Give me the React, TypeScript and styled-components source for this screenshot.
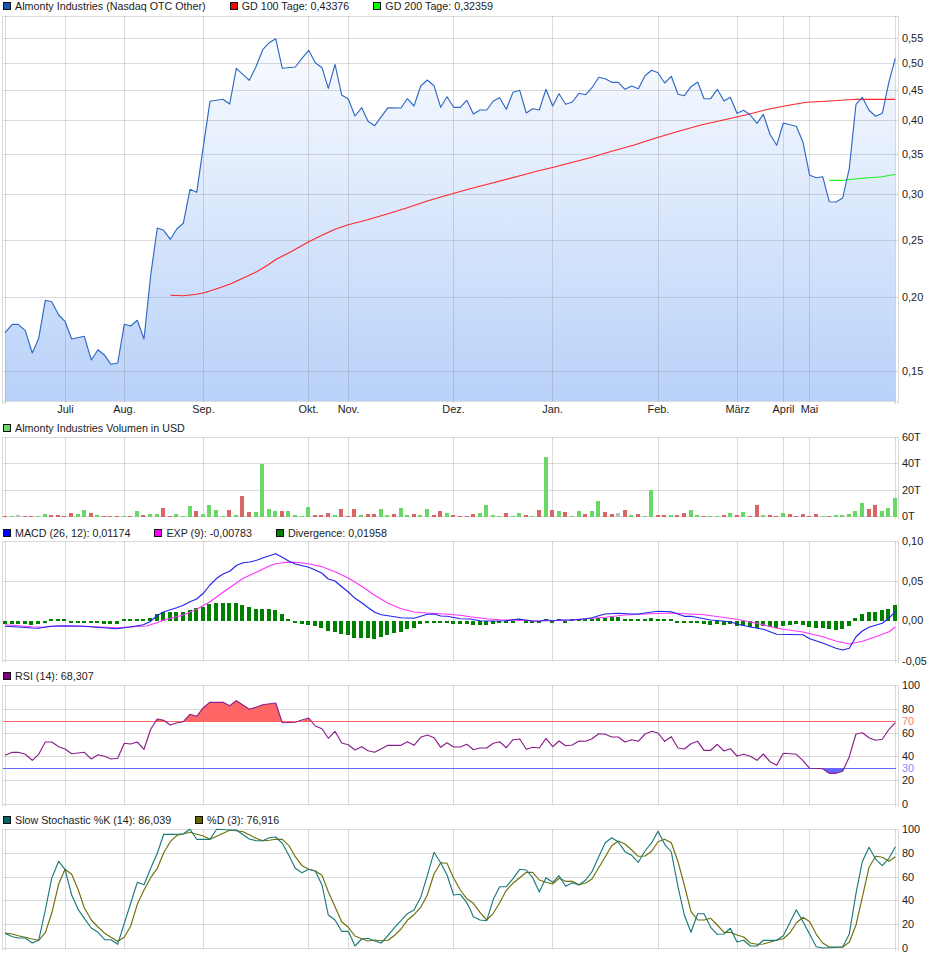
import React from 'react'
import styled, { createGlobalStyle } from 'styled-components'

const GlobalStyle = createGlobalStyle`
    html, body {
        margin: 0;
        padding: 0;
        background: #fff;
    }
`

const Page = styled.div`
    width: 940px;
    height: 958px;
    overflow: hidden;
    font-family: 'Liberation Sans', Arial, sans-serif;
    font-size: 10.72px;
    color: #1c1c1c;
`

const Legend = styled.div`
    display: flex;
    align-items: center;
    gap: 24px;
    height: 12px;
    padding-left: 3px;
    white-space: nowrap;
`

const LegendItem = styled.div`
    display: flex;
    align-items: center;
    gap: 4px;
`

const Swatch = styled.span<{ $color: string }>`
    width: 6px;
    height: 6px;
    border: 1px solid #111;
    background: ${(p) => p.$color};
`

const Plot = styled.svg`
    display: block;
    overflow: visible;
`

const GridLine = styled.line`
    stroke: rgba(137, 137, 137, 0.3);
    stroke-width: 1;
    shape-rendering: crispEdges;
`

const Series = styled.polyline<{ $color: string }>`
    fill: none;
    stroke: ${(p) => p.$color};
    stroke-width: 1.15;
    stroke-linejoin: round;
`

const Level = styled.line<{ $color: string }>`
    stroke: ${(p) => p.$color};
    stroke-width: 1;
    shape-rendering: crispEdges;
`

const Bar = styled.rect`
    shape-rendering: crispEdges;
`

const AxisLabel = styled.text<{ $color?: string }>`
    font-family: 'Liberation Sans', Arial, sans-serif;
    font-size: 10.9px;
    fill: ${(p) => p.$color || '#1c1c1c'};
    dominant-baseline: central;
`

// the reference was read at 3x: these turn crop coordinates back into page pixels
const crop = (ox: number, oy: number, list: number[]) => {
    const out: string[] = []
    for (let i = 0; i < list.length; i += 2) {
        out.push(`${(ox + list[i] / 3).toFixed(1)},${(oy + list[i + 1] / 3).toFixed(1)}`)
    }
    return out.join(' ')
}
const barX = (i: number) => Math.round(5 + 6.593 * i)

const MONTHS: [string, number][] = [
    ['Juli', 65.5],
    ['Aug.', 124.5],
    ['Sep.', 203.5],
    ['Okt.', 308.5],
    ['Nov.', 348.5],
    ['Dez.', 453.5],
    ['Jan.', 552.5],
    ['Feb.', 658.5],
    ['März', 737.5],
    ['April', 783.5],
    ['Mai', 809.5],
]

const PRICE =
    crop(0, 220, [
        15, 338, 37, 313, 55, 313, 76, 332, 97, 399, 116, 355, 136, 241, 155, 245, 176, 285, 195, 304, 215, 357, 253,
        349, 274, 420, 294, 389, 314, 406, 333, 433, 353, 429, 373, 313, 392, 318, 412, 301, 432, 357, 452, 165, 472, 24,
        491, 31, 511, 58, 531, 26, 550, 10,
    ]) +
    ' ' +
    crop(0, 0, [
        570, 568, 590, 577, 610, 440, 630, 304, 669, 298, 689, 312, 709, 205, 748, 241, 768, 200, 788, 149, 808, 128,
        827, 116, 847, 205, 886, 201, 906, 175, 926, 151, 946, 188, 966, 203, 985, 265, 1005, 193, 1025, 285, 1045, 297,
        1065, 348, 1085, 323, 1104, 364, 1124, 377, 1144, 350, 1164, 323, 1203, 324, 1222, 296, 1242, 318, 1262, 258,
        1282, 240, 1302, 257, 1322, 322, 1341, 290, 1361, 322, 1381, 322, 1400, 301,
    ]) +
    ' ' +
    crop(470, 0, [
        0, 320, 10, 342, 30, 330, 50, 330, 70, 303, 89, 293, 109, 328, 129, 277, 149, 271, 169, 339, 188, 326, 208, 330,
        228, 268, 248, 318, 267, 281, 287, 313, 307, 306, 327, 280, 347, 284, 366, 263, 386, 232, 406, 236, 425, 247,
        445, 247, 465, 268, 485, 258, 505, 266, 525, 227, 545, 211, 564, 218, 584, 249, 604, 229, 624, 283, 643, 287,
        663, 260, 683, 246, 702, 296, 722, 296, 742, 268, 762, 303, 781, 292, 801, 340, 821, 331, 841, 345, 861, 370,
        880, 343, 900, 403, 920, 436, 940, 369, 979, 379, 999, 427, 1019, 526, 1039, 533, 1058, 530, 1078, 605, 1098,
        606, 1118, 594, 1138, 505, 1158, 313, 1177, 292, 1197, 331, 1217, 349, 1237, 340, 1257, 245, 1276, 175,
    ])

const GD100 =
    crop(0, 220, [
        511, 226, 550, 227, 590, 223, 610, 219, 650, 206, 689, 193, 730, 174, 770, 155, 800, 137, 830, 117, 870, 97, 926,
        65, 966, 46, 1005, 28, 1045, 14,
    ]) +
    ' ' +
    crop(0, 0, [1100, 660, 1164, 641, 1222, 623, 1282, 603, 1341, 586, 1410, 566]) +
    ' ' +
    crop(470, 0, [
        70, 548, 150, 527, 200, 514, 250, 502, 300, 489, 360, 473, 420, 455, 490, 436, 560, 413, 620, 395, 690, 376, 760,
        360, 830, 344, 900, 326, 960, 315, 1010, 307, 1080, 303, 1160, 298, 1276, 298,
    ])

const GD200 = crop(470, 0, [1078, 541, 1118, 541, 1177, 535, 1237, 530, 1276, 523])

// g = green, r = red, n = grey; heights in crop units
const VOLUME: [number, string][] = [
    [2, 'r'], [2, 'g'], [5, 'n'], [2, 'r'], [2, 'r'], [2, 'g'], [8, 'g'], [5, 'r'], [5, 'r'], [2, 'r'],
    [11, 'r'], [8, 'g'], [20, 'g'], [11, 'r'], [5, 'g'], [2, 'r'], [2, 'r'], [2, 'r'], [2, 'g'], [2, 'r'],
    [17, 'g'], [5, 'r'], [8, 'g'], [8, 'g'], [26, 'r'], [2, 'r'], [8, 'g'], [2, 'g'], [32, 'g'], [17, 'r'],
    [8, 'g'], [35, 'g'], [20, 'g'], [2, 'g'], [20, 'r'], [5, 'g'], [62, 'r'], [14, 'r'], [14, 'g'], [158, 'g'],
    [23, 'g'], [17, 'g'], [17, 'r'], [17, 'g'], [5, 'g'], [2, 'g'], [29, 'g'], [5, 'r'], [5, 'r'], [11, 'r'],
    [5, 'g'], [23, 'r'], [2, 'r'], [23, 'r'], [5, 'g'], [8, 'r'], [8, 'r'], [23, 'g'], [5, 'g'], [8, 'r'],
    [26, 'g'], [5, 'g'], [8, 'r'], [5, 'g'], [23, 'g'], [5, 'r'], [17, 'r'], [11, 'g'], [5, 'r'], [2, 'r'],
    [2, 'r'], [8, 'r'], [11, 'g'], [35, 'g'], [5, 'g'], [2, 'g'], [11, 'r'], [2, 'g'], [11, 'g'], [5, 'r'],
    [2, 'g'], [20, 'r'], [180, 'g'], [20, 'r'], [17, 'g'], [14, 'r'], [2, 'g'], [17, 'g'], [8, 'r'], [17, 'g'],
    [47, 'g'], [14, 'r'], [8, 'r'], [11, 'n'], [20, 'r'], [5, 'g'], [8, 'r'], [2, 'g'], [80, 'g'], [5, 'r'],
    [5, 'r'], [5, 'g'], [5, 'r'], [11, 'r'], [20, 'g'], [5, 'g'], [2, 'r'], [2, 'g'], [2, 'g'], [5, 'r'],
    [11, 'g'], [5, 'r'], [14, 'g'], [2, 'r'], [35, 'r'], [5, 'g'], [5, 'r'], [2, 'r'], [11, 'g'], [8, 'r'],
    [2, 'r'], [8, 'r'], [2, 'r'], [8, 'r'], [2, 'g'], [2, 'r'], [5, 'g'], [5, 'g'], [8, 'g'], [17, 'g'],
    [41, 'g'], [23, 'r'], [35, 'r'], [17, 'g'], [26, 'g'], [56, 'g'],
]
const VOLUME_COLORS: Record<string, string> = { g: '#6ad867', r: '#d96666', n: '#bdbdbd' }

const DIVERGENCE = [
    -10, -8, -8, -8, -11, -8, -5, 3, 3, 3, -3, -3, -5, -5, -6, -8, -8, -8, 2, 2, 2, 2, 10, 22, 28, 28, 28, 28, 32, 38,
    43, 52, 55, 55, 53, 55, 48, 42, 37, 37, 35, 32, 20, 7, -3, -9, -11, -16, -22, -30, -33, -38, -42, -50, -50, -52, -55,
    -48, -42, -36, -32, -24, -20, -10, -5, -3, -5, -7, -9, -9, -10, -12, -12, -12, -10, -6, -6, -2, 2, -4, -5, -7, 1, -3,
    0, -1, 1, 2, 2, 3, 10, 10, 11, 12, 7, 4, 1, 2, 8, 7, 4, 4, -3, -6, -6, -6, -9, -12, -9, -12, -10, -14, -16, -18, -20,
    -14, -18, -20, -16, -11, -10, -12, -18, -20, -20, -25, -27, -25, -15, 8, 22, 28, 28, 32, 37, 47,
]

const MACD =
    crop(0, 420, [
        15, 619, 55, 621, 95, 624, 116, 625, 150, 619, 195, 617, 250, 619, 290, 622, 350, 626, 390, 621, 430, 614, 450,
        605, 470, 588, 490, 576, 530, 563, 550, 556, 570, 545, 590, 537, 610, 520, 630, 495, 650, 475, 669, 462, 689,
        454, 710, 436, 730, 428, 750, 426, 770, 421, 790, 413, 827, 401, 847, 412, 866, 423, 886, 432, 926, 442, 946,
        450, 966, 460, 985, 477, 1005, 483, 1025, 500, 1045, 516, 1065, 535, 1085, 548, 1105, 563, 1124, 577, 1144, 584,
        1164, 587, 1203, 593, 1242, 595, 1262, 589, 1282, 583, 1302, 582, 1322, 588, 1341, 589, 1381, 596,
    ]) +
    ' ' +
    crop(470, 420, [
        0, 597, 30, 602, 70, 603, 108, 602, 147, 597, 187, 603, 207, 604, 228, 599, 248, 602, 267, 600, 307, 600, 347,
        596, 366, 593, 386, 587, 406, 582, 445, 580, 485, 582, 505, 582, 525, 579, 564, 574, 604, 575, 643, 589, 663,
        589, 702, 596, 722, 600, 781, 605, 801, 612, 841, 621, 880, 628, 920, 643, 999, 644, 1019, 656, 1058, 669, 1098,
        685, 1118, 690, 1138, 685, 1158, 650, 1177, 633, 1197, 622, 1237, 610, 1257, 594, 1276, 575,
    ])

const EXP =
    crop(0, 420, [
        15, 614, 55, 617, 95, 620, 130, 622, 170, 618, 250, 619, 300, 621, 350, 623, 400, 620, 440, 618, 470, 608, 500,
        598, 550, 585, 590, 568, 630, 545, 669, 517, 710, 488, 730, 475, 770, 456, 808, 438, 827, 431, 860, 427, 886,
        427, 926, 431, 966, 440, 1005, 455, 1045, 474, 1085, 499, 1124, 526, 1164, 550, 1203, 566, 1242, 576, 1282, 579,
        1322, 581, 1381, 586,
    ]) +
    ' ' +
    crop(470, 420, [
        0, 590, 50, 596, 100, 600, 147, 601, 207, 603, 248, 602, 307, 600, 366, 595, 406, 592, 465, 585, 525, 582, 604,
        579, 702, 584, 801, 598, 860, 610, 920, 625, 999, 636, 1058, 650, 1098, 663, 1138, 672, 1177, 664, 1217, 650,
        1257, 635, 1276, 621,
    ])

const RSI =
    crop(0, 665, [
        15, 271, 37, 262, 55, 262, 76, 268, 97, 286, 116, 268, 136, 231, 155, 231, 176, 245, 195, 252, 215, 266, 253,
        262, 274, 282, 294, 269, 314, 274, 333, 282, 353, 280, 373, 235, 392, 237, 412, 231, 432, 253, 452, 193, 472,
        162, 491, 166, 511, 180, 531, 173, 550, 170, 570, 148, 590, 154, 610, 128, 630, 112, 669, 112, 689, 122, 709,
        107, 748, 133, 768, 127, 788, 119, 827, 114, 847, 173, 886, 172, 906, 165, 926, 159, 946, 183, 966, 191, 985,
        220, 1005, 199, 1025, 234, 1045, 239, 1065, 255, 1085, 245, 1104, 257, 1124, 262, 1164, 241, 1203, 241, 1222,
        230, 1242, 241, 1262, 217, 1282, 210, 1302, 218, 1322, 247, 1341, 233, 1361, 246, 1381, 246, 1400, 238,
    ]) +
    ' ' +
    crop(470, 665, [
        0, 245, 10, 254, 30, 249, 50, 249, 70, 235, 89, 230, 109, 248, 129, 224, 149, 222, 169, 253, 188, 247, 208, 249,
        228, 220, 248, 245, 267, 228, 287, 242, 307, 240, 327, 228, 347, 229, 366, 221, 386, 206, 406, 208, 425, 216,
        445, 216, 465, 231, 485, 224, 505, 229, 525, 207, 545, 199, 564, 204, 584, 229, 604, 215, 624, 249, 643, 252,
        663, 236, 683, 229, 702, 256, 722, 256, 742, 238, 762, 258, 781, 251, 801, 273, 821, 268, 841, 274, 861, 286,
        880, 267, 900, 290, 920, 301, 940, 265, 979, 268, 999, 287, 1019, 310, 1058, 311, 1078, 325, 1098, 325, 1118,
        319, 1138, 275, 1158, 207, 1177, 203, 1197, 218, 1217, 226, 1237, 223, 1257, 193, 1276, 173,
    ])

const RSI_HIGH = [
    crop(0, 665, [
        550, 170, 570, 148, 590, 154, 610, 128, 630, 112, 669, 112, 689, 122, 709, 107, 748, 133, 768, 127, 788, 119, 827,
        114, 845, 170,
    ]),
    crop(0, 665, [900, 170, 926, 159, 937, 170]),
    crop(0, 665, [462, 170, 472, 162, 491, 166, 500, 170]),
]
const RSI_LOW = crop(470, 665, [1058, 311, 1078, 325, 1098, 325, 1118, 319, 1122, 311])

const STOCH_K =
    crop(0, 810, [
        15, 370, 37, 380, 55, 384, 76, 384, 97, 399, 116, 391, 136, 300, 155, 205, 176, 154, 195, 178, 215, 255, 235, 299,
        253, 325, 274, 354, 294, 367, 314, 389, 333, 389, 353, 403, 373, 340, 392, 280, 412, 217, 432, 224, 452, 175, 472,
        130, 491, 73, 531, 73, 550, 71, 570, 58, 590, 88, 630, 88, 650, 58, 689, 60, 709, 60, 748, 87, 768, 92, 788, 92,
        808, 83, 827, 81, 847, 100, 866, 135, 886, 175, 906, 188, 926, 178, 946, 183, 966, 225, 985, 315, 1005, 330, 1025,
        364, 1045, 364, 1065, 408, 1085, 387, 1104, 385, 1124, 393, 1144, 399, 1164, 376, 1184, 352, 1203, 332, 1222, 311,
        1242, 300, 1262, 262, 1282, 197, 1302, 127, 1322, 158, 1341, 195, 1361, 255, 1381, 253, 1400, 278,
    ]) +
    ' ' +
    crop(470, 810, [
        0, 296, 10, 320, 30, 330, 50, 332, 70, 268, 89, 230, 109, 230, 129, 206, 149, 178, 169, 180, 188, 203, 208, 246,
        228, 203, 248, 217, 267, 197, 287, 229, 307, 218, 327, 225, 347, 210, 366, 185, 386, 140, 406, 98, 425, 83, 445,
        96, 465, 125, 485, 136, 505, 157, 525, 123, 545, 98, 564, 64, 584, 103, 604, 126, 624, 230, 643, 315, 663, 367,
        683, 311, 702, 311, 722, 352, 742, 373, 762, 372, 781, 355, 801, 396, 821, 391, 841, 408, 861, 408, 880, 391, 920,
        391, 940, 377, 979, 299, 999, 335, 1019, 373, 1039, 410, 1058, 414, 1118, 411, 1138, 372, 1158, 250, 1177, 155,
        1197, 112, 1217, 148, 1237, 167, 1257, 145, 1276, 110,
    ])

const STOCH_D =
    crop(0, 810, [
        15, 369, 37, 372, 55, 377, 76, 382, 97, 387, 116, 391, 136, 368, 155, 310, 176, 222, 195, 178, 215, 193, 235, 240,
        253, 293, 274, 330, 294, 351, 314, 370, 333, 382, 353, 394, 373, 382, 392, 348, 412, 283, 432, 240, 452, 203, 472,
        175, 491, 128, 511, 95, 531, 76, 550, 72, 570, 67, 590, 73, 610, 78, 630, 88, 650, 79, 689, 61, 709, 62, 729, 65,
        748, 74, 768, 85, 788, 92, 808, 91, 827, 88, 847, 88, 866, 106, 886, 140, 906, 167, 926, 178, 946, 183, 966, 196,
        985, 245, 1005, 290, 1025, 335, 1045, 352, 1065, 378, 1085, 386, 1104, 393, 1124, 390, 1144, 392, 1164, 391, 1184,
        376, 1203, 357, 1222, 331, 1242, 314, 1262, 292, 1282, 255, 1302, 192, 1322, 158, 1341, 160, 1361, 205, 1381, 240,
        1400, 266,
    ]) +
    ' ' +
    crop(470, 810, [
        0, 272, 10, 280, 30, 307, 50, 330, 70, 310, 89, 278, 109, 241, 129, 220, 149, 203, 169, 187, 188, 187, 208, 210,
        228, 217, 248, 222, 267, 205, 287, 214, 307, 214, 327, 224, 347, 219, 366, 207, 386, 173, 406, 140, 425, 107, 445,
        93, 465, 102, 485, 120, 505, 139, 525, 138, 545, 124, 564, 95, 584, 88, 604, 98, 624, 155, 643, 225, 663, 305,
        683, 330, 702, 330, 722, 325, 742, 345, 762, 367, 781, 367, 801, 375, 821, 381, 841, 399, 861, 403, 880, 402, 920,
        391, 940, 386, 960, 368, 979, 339, 999, 322, 1019, 335, 1039, 373, 1058, 399, 1078, 411, 1118, 411, 1138, 397, 1158,
        345, 1177, 262, 1197, 172, 1217, 139, 1237, 142, 1257, 154, 1276, 140,
    ])

// month lines stop at the last row, the frame lines run a little past it
const Grid = ({ rows }: { rows: number[] }) => {
    const top = rows[0] - 0.5
    const bottom = rows[rows.length - 1] + 0.5
    return (
        <>
            {MONTHS.map(([name, x]) => (
                <GridLine key={name} x1={x} x2={x} y1={top} y2={bottom} />
            ))}
            {[2.5, 5.5, 895.5, 898.5].map((x) => (
                <GridLine key={x} x1={x} x2={x} y1={top} y2={bottom + 2} />
            ))}
            {rows.map((y) => (
                <GridLine key={y} x1={3} x2={898} y1={y} y2={y} />
            ))}
        </>
    )
}

const Ticks = ({ items }: { items: [string, number, string?][] }) => (
    <>
        {items.map(([text, y, color]) => (
            <AxisLabel key={text} x={902} y={y} $color={color}>
                {text}
            </AxisLabel>
        ))}
    </>
)

const PRICE_ROWS = [16.5, 38.5, 63.5, 90.5, 120.5, 154.5, 194.5, 240.5, 297.5, 371.5, 401.5]

export default function App() {
    return (
        <Page>
            <GlobalStyle />

            <Legend>
                <LegendItem>
                    <Swatch $color="#1a56b8" />
                    Almonty Industries (Nasdaq OTC Other)
                </LegendItem>
                <LegendItem>
                    <Swatch $color="#ff0000" />
                    GD 100 Tage: 0,43376
                </LegendItem>
                <LegendItem>
                    <Swatch $color="#00ff00" />
                    GD 200 Tage: 0,32359
                </LegendItem>
            </Legend>
            <Plot width={940} height={410} viewBox="0 12 940 410">
                <defs>
                    <linearGradient id="priceFill" gradientUnits="userSpaceOnUse" x1="0" x2="0" y1="38" y2="401">
                        <stop offset="0" stopColor="#fafcff" />
                        <stop offset="1" stopColor="#b8d1f9" />
                    </linearGradient>
                </defs>
                <polygon points={`5,401 ${PRICE} 895.3,401`} fill="url(#priceFill)" />
                <Grid rows={PRICE_ROWS} />
                <Series points={GD100} $color="#ff2626" />
                <Series points={GD200} $color="#1cf01c" />
                <Series points={PRICE} $color="#2f68c4" />
                <Ticks
                    items={[
                        ['0,55', 38],
                        ['0,50', 63],
                        ['0,45', 90],
                        ['0,40', 120],
                        ['0,35', 154],
                        ['0,30', 194],
                        ['0,25', 240],
                        ['0,20', 297],
                        ['0,15', 371],
                    ]}
                />
                {MONTHS.map(([name, x]) => (
                    <AxisLabel key={name} x={x} y={409} textAnchor="middle">
                        {name}
                    </AxisLabel>
                ))}
            </Plot>

            <Legend>
                <LegendItem>
                    <Swatch $color="#6ad867" />
                    Almonty Industries Volumen in USD
                </LegendItem>
            </Legend>
            <Plot width={940} height={93} viewBox="0 434 940 93">
                <Grid rows={[437.5, 463.5, 490.5, 516.5]} />
                {VOLUME.map(([h, c], i) => (
                    <Bar
                        key={i}
                        x={barX(i) - 2}
                        y={517 - Math.max(1, Math.round(h / 3))}
                        width={4}
                        height={Math.max(1, Math.round(h / 3))}
                        fill={VOLUME_COLORS[c]}
                    />
                ))}
                <Ticks
                    items={[
                        ['60T', 437],
                        ['40T', 463],
                        ['20T', 490],
                        ['0T', 516],
                    ]}
                />
            </Plot>

            <Legend>
                <LegendItem>
                    <Swatch $color="#0000ff" />
                    MACD (26, 12): 0,01174
                </LegendItem>
                <LegendItem>
                    <Swatch $color="#ff00ff" />
                    EXP (9): -0,00783
                </LegendItem>
                <LegendItem>
                    <Swatch $color="#008000" />
                    Divergence: 0,01958
                </LegendItem>
            </Legend>
            <Plot width={940} height={131} viewBox="0 539 940 131">
                <Grid rows={[541.5, 581.5, 660.5]} />
                {DIVERGENCE.map((v, i) => {
                    const h = Math.max(2, Math.round(Math.abs(v) / 3))
                    return <Bar key={i} x={barX(i) - 2} y={v >= 0 ? 621 - h : 621} width={4} height={h} fill="#008000" />
                })}
                <Series points={EXP} $color="#ff33ff" />
                <Series points={MACD} $color="#2222ee" />
                <Ticks
                    items={[
                        ['0,10', 541],
                        ['0,05', 581],
                        ['0,00', 620],
                        ['-0,05', 661],
                    ]}
                />
            </Plot>

            <Legend>
                <LegendItem>
                    <Swatch $color="#800080" />
                    RSI (14): 68,307
                </LegendItem>
            </Legend>
            <Plot width={940} height={132} viewBox="0 682 940 132">
                <Grid rows={[685.5, 709.5, 733.5, 756.5, 780.5, 804.5]} />
                {RSI_HIGH.map((p) => (
                    <polygon key={p} points={p} fill="#ff6666" />
                ))}
                <polygon points={RSI_LOW} fill="#6666ff" />
                <Level x1={3} x2={896} y1={721.5} y2={721.5} $color="#ff6666" />
                <Level x1={3} x2={896} y1={768.5} y2={768.5} $color="#6666ff" />
                <Series points={RSI} $color="#8a1f8a" />
                <Ticks
                    items={[
                        ['100', 685],
                        ['80', 709],
                        ['70', 721, '#ff7777'],
                        ['60', 733],
                        ['40', 756],
                        ['30', 768, '#8888ff'],
                        ['20', 780],
                        ['0', 804],
                    ]}
                />
            </Plot>

            <Legend>
                <LegendItem>
                    <Swatch $color="#006666" />
                    Slow Stochastic %K (14): 86,039
                </LegendItem>
                <LegendItem>
                    <Swatch $color="#666600" />
                    %D (3): 76,916
                </LegendItem>
            </Legend>
            <Plot width={940} height={132} viewBox="0 826 940 132">
                <Grid rows={[829.5, 853.5, 877.5, 900.5, 924.5, 948.5]} />
                <Series points={STOCH_D} $color="#6f6f0a" />
                <Series points={STOCH_K} $color="#1a7a7a" />
                <Ticks
                    items={[
                        ['100', 829],
                        ['80', 853],
                        ['60', 877],
                        ['40', 900],
                        ['20', 924],
                        ['0', 948],
                    ]}
                />
            </Plot>
        </Page>
    )
}
